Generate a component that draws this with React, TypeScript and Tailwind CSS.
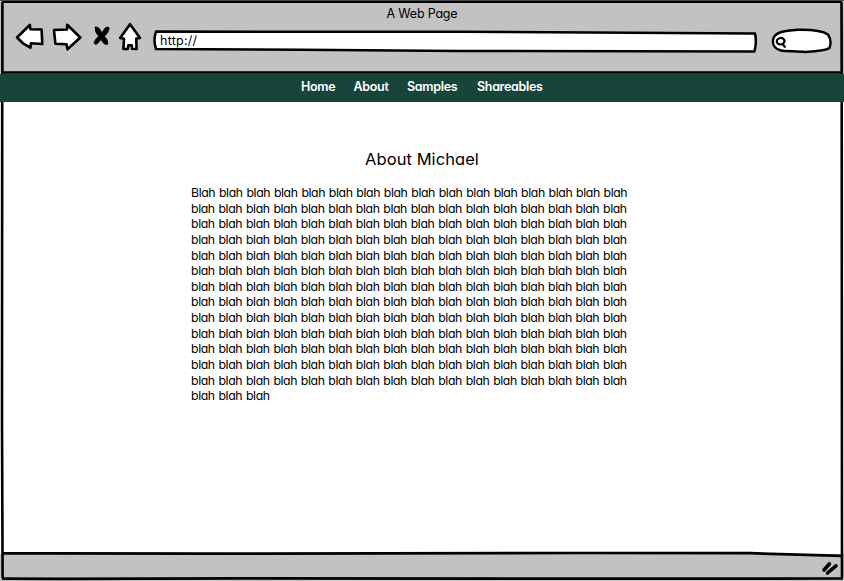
import React from 'react';

const NAV = [
  { label: 'Home', box: 'w-[34px]' },
  { label: 'About', box: 'w-[35px]' },
  { label: 'Samples', box: 'w-[51.5px]' },
  { label: 'Shareables', box: 'w-[66px]' },
];

const fullLine = Array(16).fill('blah').join(' ');
const LINES = [
  fullLine.replace('blah', 'Blah'),
  ...Array(12).fill(fullLine),
  'blah blah blah',
];

function Toolbar() {
  return (
    <svg className="block h-[36px] w-[138px]" viewBox="10 20 138 36" fill="white" stroke="black" strokeWidth="2.6" strokeLinejoin="round" strokeLinecap="round">
      <path d="M17 37.5 L29.8 25 L30.5 29.2 L41.6 29.5 L42.3 44 L31 43.3 L30.4 47.7 L23 43.3 Z" />
      <path d="M54 30 L67 29.5 L67.2 24.8 L80.3 37.5 L67.5 49.3 L66.5 44.3 L55.5 43.8 Q54.6 37 54 30 Z" />
      <path d="M95.3 27.2 Q98 26 100 29.5 L101.8 33 L105 28.2 Q107.5 26 109.3 28 Q108.5 33 104.3 36.3 Q108 39.5 107.8 44 Q105 45.5 103 42.5 L101 39.5 L97.5 43.5 Q95 45.5 94 42.8 Q95 39 98.7 36.2 Q94.5 32 95.3 27.2 Z" fill="black" strokeWidth="0.9" />
      <path d="M130 24.2 L140 38 L136.2 38.5 L136.6 49 L132 48.8 L131.8 45.3 L128.3 45.3 L127.8 49 L123.4 49 L124 38.8 L120.2 38 Z" />
    </svg>
  );
}

function AddressBar() {
  return (
    <div className="relative h-[24px] w-[604px]">
      <svg className="absolute inset-0" width="604" height="24" viewBox="153 29 604 24">
        <path d="M156 31.6 L460 31.8 L590 32.4 L755 33.5 Q757 42 754.4 51.5 L460 51 L300 49.7 L156 49 Q153 40 156 31.6 Z" fill="white" stroke="black" strokeWidth="2.5" strokeLinejoin="round" />
      </svg>
      <span className="relative ml-[7px] block pt-[4px] text-[12.5px] leading-[15px] tracking-[0.25px]">http://</span>
    </div>
  );
}

function SearchBox() {
  return (
    <svg className="block" width="62" height="26" viewBox="771 28 62 26" strokeLinecap="round">
      <path d="M773 40 C774 32 784 30.7 798 29.8 C812 29.5 823 31 828 34.5 C831 39 831 44 829.5 48 C825 51 814 51.5 805 52 C798 51 787 51.5 781 50.5 C774 48.5 772.5 45 773 40 Z" fill="white" stroke="black" strokeWidth="2.4" />
      <path d="M783.5 39 C781.5 37 777 38 776.8 41.5 C777 45 782.5 45.5 784 42.5 C784.8 41 784.5 39.8 783.5 39 M782.7 44.3 L784.8 46.8" fill="none" stroke="black" strokeWidth="2.2" />
    </svg>
  );
}

/** Hand-drawn strokes around the window. */
function Frame() {
  return (
    <svg className="pointer-events-none absolute inset-0" width="844" height="581" viewBox="0 0 844 581" fill="none" stroke="black">
      <path d="M0 0.5 H844" stroke="#454b49" strokeWidth="1" />
      <path d="M2 2 H842" strokeWidth="2" />
      <path d="M2.4 2 V74 M2.2 102 L2 420 L2.6 578" strokeWidth="2.6" />
      <path d="M841.5 2 L841.7 74 M841.7 102 L842 578" strokeWidth="2.6" />
      <path d="M2 72.5 L140 72.4 L640 72.4 L842 72.4" strokeWidth="2.5" />
      <path d="M2 553.4 L50 553.4 L220 553.6 L580 553 L750 553.2 L842 555.8" strokeWidth="2.7" />
      <path d="M2 578.6 L60 578.8 L240 578.4 L600 578.6 L843 578.5" strokeWidth="2.7" />
      <path d="M829.5 563.8 L824 570 M836 565.8 L827.5 573" strokeWidth="3.6" strokeLinecap="round" />
    </svg>
  );
}

export default function App() {
  return (
    <div className="relative flex h-[581px] w-[844px] flex-col overflow-hidden bg-white text-black [font-family:Inter,'Open_Sans',sans-serif] [font-feature-settings:'cv11'_1]">
      <header className="flex h-[74px] shrink-0 flex-col bg-[#c2c2c2]">
        <div className="flex h-[20px] justify-center pt-[6px] text-[12.5px] leading-[16px] tracking-[-0.2px]">A Web Page</div>
        <div className="flex h-[36px] items-start pl-[10px]">
          <Toolbar />
          <div className="ml-[5px] mt-[9px]"><AddressBar /></div>
          <div className="ml-[14px] mt-[8px]"><SearchBox /></div>
        </div>
      </header>
      <nav className="flex h-[28px] shrink-0 justify-center gap-[18.5px] bg-[#18453b] pt-[5px] text-[12.5px] font-semibold leading-[16px] tracking-[-0.32px] text-white">
        {NAV.map((n) => (
          <a key={n.label} className={`whitespace-nowrap ${n.box}`}>{n.label}</a>
        ))}
      </nav>
      <main className="flex-1">
        <h1 className="mt-[46px] text-center text-[16.5px] leading-[22px] tracking-[0.07px]">About Michael</h1>
        <div className="ml-[191px] mt-[15px] text-[12.3px] leading-[15.62px] tracking-[-0.4px] [word-spacing:0.7px]">
          {LINES.map((line, i) => (
            <p key={i} className="whitespace-nowrap">{line}</p>
          ))}
        </div>
      </main>
      <footer className="h-[27px] shrink-0 bg-[#c2c2c2]" />
      <Frame />
    </div>
  );
}
